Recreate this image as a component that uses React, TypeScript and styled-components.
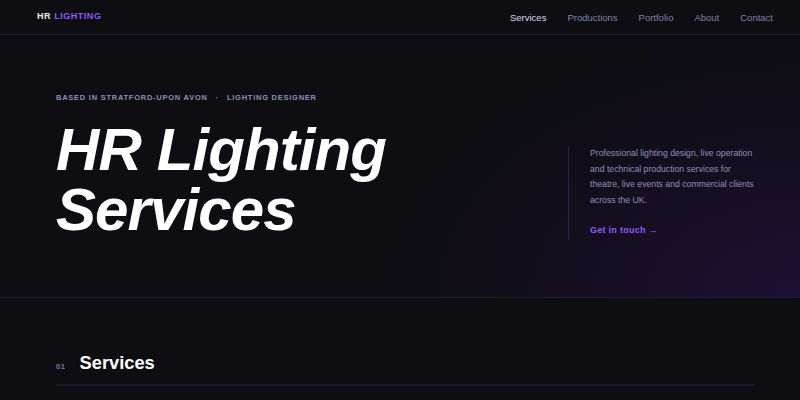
import React from "react";
import styled, { createGlobalStyle } from "styled-components";

const Global = createGlobalStyle`
  html, body { margin: 0; padding: 0; background: #0e0d12; }
  body { font-family: "Liberation Sans", Arial, sans-serif; color: #e8e8ee; }
  * { box-sizing: border-box; }
`;

const Page = styled.div`
  width: 800px;
  min-height: 400px;
  background: #0e0d12;
  overflow: hidden;
`;

const Header = styled.header`
  height: 35px;
  display: flex;
  align-items: center;
  justify-content: space-between;
  padding: 0 27px 0 37px;
  border-bottom: 1px solid #1f1a33;
`;

const Logo = styled.div`
  font-size: 9px;
  font-weight: 700;
  letter-spacing: 0.06em;
  color: #ececf2;
  margin-top: -3px;
`;

const LogoAccent = styled.span`
  color: #8b5cf6;
`;

const Nav = styled.nav`
  display: flex;
  gap: 21px;
`;

const NavLink = styled.a<{ $active?: boolean }>`
  font-size: 9.5px;
  color: ${(p) => (p.$active ? "#dcdce4" : "#7d83a8")};
  text-decoration: none;
`;

const Hero = styled.section`
  display: grid;
  grid-template-columns: 1fr 187px;
  align-items: end;
  padding: 58px 45px 57px 56px;
  border-bottom: 1px solid #241d36;
  background:
    radial-gradient(ellipse 520px 330px at 100% 100%, rgba(90, 25, 170, 0.22), rgba(60, 20, 120, 0.08) 55%, transparent 80%);
`;

const Intro = styled.div`
  display: flex;
  flex-direction: column;
`;

const Eyebrow = styled.div`
  display: flex;
  gap: 8px;
  font-size: 7.5px;
  font-weight: 700;
  letter-spacing: 0.1em;
  color: #8a90b8;
  text-transform: uppercase;
`;

const Title = styled.h1`
  margin: 18px 0 0;
  font-size: 60px;
  line-height: 60px;
  font-weight: 700;
  font-style: italic;
  letter-spacing: -0.015em;
  color: #ffffff;
`;

const Aside = styled.div`
  border-left: 1px solid #2a2544;
  padding: 0 0 4px 21px;
  font-size: 9px;
`;

const Lead = styled.p`
  margin: 0;
  font-size: 8.7px;
  line-height: 15.5px;
  color: #8f90b6;
`;

const Cta = styled.a`
  display: block;
  width: fit-content;
  margin-top: 16px;
  font-size: 9px;
  line-height: 12px;
  font-weight: 700;
  letter-spacing: 0.03em;
  color: #8b5cf6;
  text-decoration: none;
`;

const Section = styled.section`
  padding: 54px 45px 0 56px;
`;

const SectionHead = styled.div`
  display: flex;
  align-items: baseline;
  gap: 14px;
  padding-bottom: 10px;
  border-bottom: 2px solid #1a1828;
`;

const Index = styled.span`
  font-size: 7.5px;
  font-weight: 700;
  letter-spacing: 0.08em;
  color: #6d78aa;
`;

const SectionTitle = styled.h2`
  margin: 0;
  font-size: 18.3px;
  font-weight: 700;
  color: #ffffff;
`;

export default function App() {
  const links = ["Services", "Productions", "Portfolio", "About", "Contact"];
  return (
    <Page>
      <Global />
      <Header>
        <Logo>
          HR <LogoAccent>LIGHTING</LogoAccent>
        </Logo>
        <Nav>
          {links.map((l, i) => (
            <NavLink key={l} href="#" $active={i === 0}>
              {l}
            </NavLink>
          ))}
        </Nav>
      </Header>
      <Hero>
        <Intro>
          <Eyebrow>
            <span>Based in Stratford-upon Avon</span>
            <span>·</span>
            <span>Lighting Designer</span>
          </Eyebrow>
          <Title>
            HR Lighting
            <br />
            Services
          </Title>
        </Intro>
        <Aside>
          <Lead>
            Professional lighting design, live operation and technical production services for theatre, live
            events and commercial clients across the UK.
          </Lead>
          <Cta href="#">Get in touch →</Cta>
        </Aside>
      </Hero>
      <Section>
        <SectionHead>
          <Index>01</Index>
          <SectionTitle>Services</SectionTitle>
        </SectionHead>
      </Section>
    </Page>
  );
}
